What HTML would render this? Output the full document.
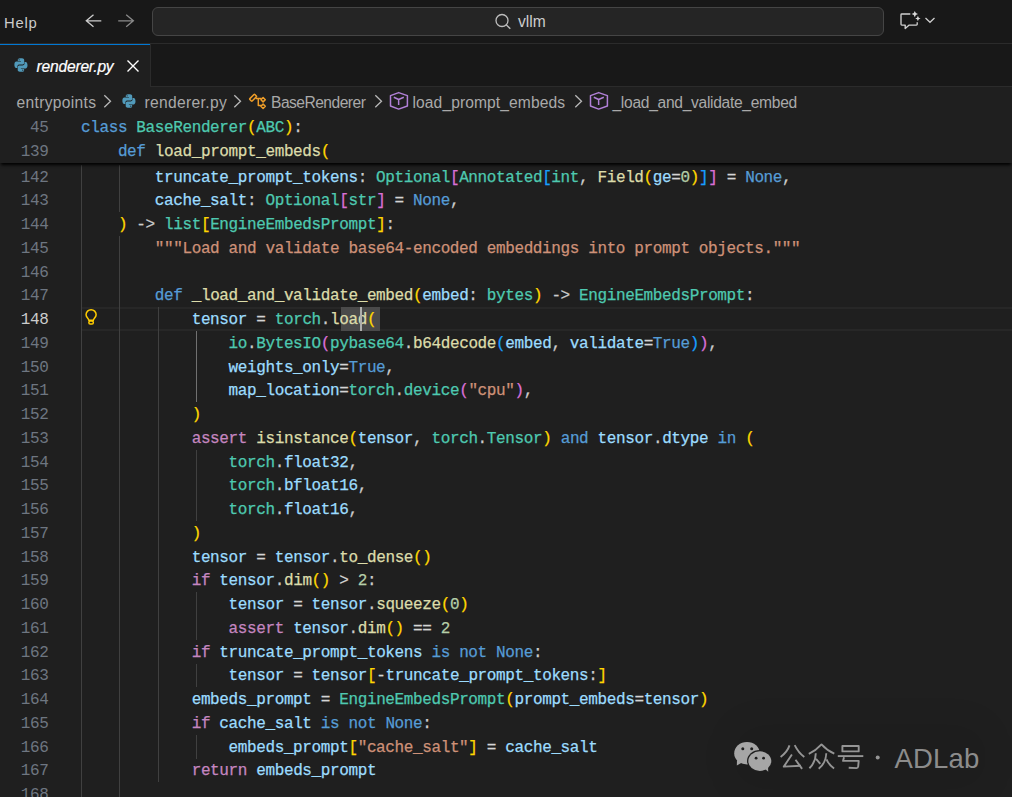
<!DOCTYPE html>
<html><head><meta charset="utf-8">
<style>
*{margin:0;padding:0;box-sizing:border-box}
html,body{width:1012px;height:797px;overflow:hidden;background:#1f1f1f}
body{position:relative;font-family:"Liberation Sans",sans-serif}
.abs{position:absolute}
#title{position:absolute;left:0;top:0;width:1012px;height:43px;background:#181818}
#titleb{position:absolute;left:0;top:43px;width:1012px;height:1px;background:#2b2b2b}
#tabs{position:absolute;left:0;top:44px;width:1012px;height:42px;background:#181818}
#tabsb{position:absolute;left:0;top:86px;width:1012px;height:1px;background:#2b2b2b}
#tab{position:absolute;left:0;top:44px;width:150px;height:43px;background:#1f1f1f}
#tabtop{position:absolute;left:0;top:44px;width:150px;height:1px;background:#0078d4}
#tabr{position:absolute;left:150px;top:44px;width:1px;height:43px;background:#2b2b2b}
.menu{position:absolute;left:4px;top:14.5px;font-size:14.8px;letter-spacing:0.8px;color:#cccccc}
#search{position:absolute;left:152px;top:7px;width:732px;height:29px;border:1px solid #454545;border-radius:6px;background:#252525}
.stext{position:absolute;left:518px;top:12.5px;font-size:15.6px;color:#cccccc}
.bc{position:absolute;top:94px;font-size:15.6px;color:#a9a9a9;white-space:pre}
.code{font-family:"Liberation Mono",monospace}
.ln{position:absolute;left:0;width:48.5px;text-align:right;font-family:"Liberation Mono",monospace;font-size:16px;line-height:23.75px;color:#6e7681;white-space:pre;letter-spacing:-0.38px}
.ln.act{color:#cccccc}
.cl{position:absolute;left:81.0px;font-family:"Liberation Mono",monospace;font-size:16px;line-height:23.75px;color:#cccccc;white-space:pre;letter-spacing:-0.38px;-webkit-text-stroke:0.25px currentColor}
.g{position:absolute;width:1px;background:#404040}
.ga{background:#707070}
.k{color:#569cd6}.c{color:#c586c0}.t{color:#4ec9b0}.f{color:#dcdcaa}.v{color:#9cdcfe}.s{color:#ce9178}.n{color:#b5cea8}
.b1{color:#ffd700}.b2{color:#da70d6}.b3{color:#179fff}.o{color:#d4d4d4}
#sticky{position:absolute;left:0;top:115px;width:1012px;height:48px;background:#1f1f1f;box-shadow:0 3px 3px -1px #000;z-index:5}
#curline{position:absolute;left:82px;top:307px;width:930px;height:24px;border-top:2px solid #272727;border-bottom:2px solid #272727}
#wordhl{position:absolute;left:341px;top:307px;width:39px;height:24px;background:#4a4a4a}
#cursor{position:absolute;left:360px;top:307px;width:2px;height:24px;background:#aeafad;z-index:3}
</style></head><body>
<div id="title"></div><div id="titleb"></div>
<div class="menu">Help</div>
<svg class="abs" style="left:84px;top:13px" width="20" height="16" viewBox="0 0 20 16"><path d="M9.5 1.8 L2.3 7.8 L9.5 13.8 M2.5 7.8 H17.3" stroke="#cccccc" stroke-width="1.3" fill="none"/></svg>
<svg class="abs" style="left:116px;top:13px" width="20" height="16" viewBox="0 0 20 16"><path d="M10.2 1.8 L17.4 7.8 L10.2 13.8 M2.2 7.8 H17.2" stroke="#8a8a8a" stroke-width="1.3" fill="none"/></svg>
<div id="search"></div>
<svg class="abs" style="left:494px;top:12.6px" width="18" height="18" viewBox="0 0 18 18"><circle cx="8" cy="7.5" r="6" stroke="#bdbdbd" stroke-width="1.3" fill="none"/><path d="M12.2 11.7 L16.3 15.8" stroke="#bdbdbd" stroke-width="1.4"/></svg>
<div class="stext">vllm</div>
<svg class="abs" style="left:898px;top:10px" width="26" height="22" viewBox="0 0 26 22"><path d="M12.3 4 H3.8 Q3 4 3 4.8 V14.3 Q3 15.1 3.8 15.1 H7.2 V18.6 L11.2 15.1 H18.4 Q19.2 15.1 19.2 14.3 V12.3" stroke="#d0d0d0" stroke-width="1.35" fill="none" stroke-linejoin="round"/><path d="M16.8 0.8999999999999995 L17.824 3.0759999999999996 L20.0 4.1 L17.824 5.124 L16.8 7.3 L15.776 5.124 L13.600000000000001 4.1 L15.776 3.0759999999999996 Z" fill="#d8d8d8"/><path d="M19.9 5.8 L20.764 7.636 L22.599999999999998 8.5 L20.764 9.364 L19.9 11.2 L19.035999999999998 9.364 L17.2 8.5 L19.035999999999998 7.636 Z" fill="#d8d8d8"/></svg>
<svg class="abs" style="left:924px;top:15px" width="12" height="10" viewBox="0 0 12 10"><path d="M1.5 3 L6 7.3 L10.5 3" stroke="#cccccc" stroke-width="1.3" fill="none"/></svg>

<div id="tabs"></div><div id="tabsb"></div>
<div id="tab"></div><div id="tabtop"></div><div id="tabr"></div>
<svg class="abs" style="left:13px;top:57px" width="16" height="16" viewBox="0 0 16 16"><g fill="#519aba"><path d="M7.9 1.2c-3.3 0-3.1 1.4-3.1 1.4v1.5h3.2v.5H3.5S1.4 4.4 1.4 7.8s1.9 3.3 1.9 3.3h1.1V9.5s-.1-1.9 1.9-1.9h3.1s1.8 0 1.8-1.8V2.9s.3-1.7-3.3-1.7zm-1.8 1c.3 0 .6.3.6.6s-.3.6-.6.6-.6-.3-.6-.6.3-.6.6-.6z"/><path d="M8 14.8c3.3 0 3.1-1.4 3.1-1.4v-1.5H7.9v-.5h4.5s2.1.2 2.1-3.2-1.9-3.3-1.9-3.3h-1.1v1.6s.1 1.9-1.9 1.9H6.5s-1.8 0-1.8 1.8v2.9s-.3 1.7 3.3 1.7zm1.8-1c-.3 0-.6-.3-.6-.6s.3-.6.6-.6.6.3.6.6-.3.6-.6.6z"/></g></svg>
<div class="abs" style="left:36.5px;top:57.5px;font-size:15.6px;font-style:italic;color:#ffffff;letter-spacing:-0.2px;-webkit-text-stroke:0.2px #fff">renderer.py</div>
<svg class="abs" style="left:125px;top:58px" width="16" height="16" viewBox="0 0 16 16"><path d="M2.5 2.5 L13.5 13.5 M13.5 2.5 L2.5 13.5" stroke="#ffffff" stroke-width="1.4"/></svg>

<div class="bc" style="left:16.5px;letter-spacing:0.33px">entrypoints</div>
<svg class="abs" style="left:102px;top:94px" width="12" height="16" viewBox="0 0 12 16"><path d="M2.3 1.2 L8.5 7.2 L2.3 13.2" stroke="#b8b8b8" stroke-width="1.3" fill="none"/></svg>
<svg class="abs" style="left:121px;top:93px" width="16" height="16" viewBox="0 0 16 16"><g fill="#519aba"><path d="M7.9 1.2c-3.3 0-3.1 1.4-3.1 1.4v1.5h3.2v.5H3.5S1.4 4.4 1.4 7.8s1.9 3.3 1.9 3.3h1.1V9.5s-.1-1.9 1.9-1.9h3.1s1.8 0 1.8-1.8V2.9s.3-1.7-3.3-1.7zm-1.8 1c.3 0 .6.3.6.6s-.3.6-.6.6-.6-.3-.6-.6.3-.6.6-.6z"/><path d="M8 14.8c3.3 0 3.1-1.4 3.1-1.4v-1.5H7.9v-.5h4.5s2.1.2 2.1-3.2-1.9-3.3-1.9-3.3h-1.1v1.6s.1 1.9-1.9 1.9H6.5s-1.8 0-1.8 1.8v2.9s-.3 1.7 3.3 1.7zm1.8-1c-.3 0-.6-.3-.6-.6s.3-.6.6-.6.6.3.6.6-.3.6-.6.6z"/></g></svg>
<div class="bc" style="left:144.5px;letter-spacing:0.33px">renderer.py</div>
<svg class="abs" style="left:232px;top:94px" width="12" height="16" viewBox="0 0 12 16"><path d="M2.3 1.2 L8.5 7.2 L2.3 13.2" stroke="#b8b8b8" stroke-width="1.3" fill="none"/></svg>
<svg class="abs" style="left:244px;top:90px" width="26" height="22" viewBox="0 0 26 22"><g stroke="#ee9d28" stroke-width="1.5" fill="none" stroke-linejoin="round"><rect x="5.6" y="6.1" width="7" height="3.3" rx="0.6" transform="rotate(-45 9.1 7.75)"/><path d="M11.8 8.6 H17.5 M14.3 8.6 V15.5 H17.2"/><path d="M19.1 7.5 L21.3 9.7 L19.1 11.9 L16.9 9.7 Z"/><path d="M19.1 14.1 L21.3 16.3 L19.1 18.5 L16.9 16.3 Z"/></g></svg>
<div class="bc" style="left:271px;letter-spacing:-0.52px">BaseRenderer</div>
<svg class="abs" style="left:373px;top:94px" width="12" height="16" viewBox="0 0 12 16"><path d="M2.3 1.2 L8.5 7.2 L2.3 13.2" stroke="#b8b8b8" stroke-width="1.3" fill="none"/></svg>
<svg class="abs" style="left:388px;top:91px" width="22" height="20" viewBox="0 0 22 20"><g stroke="#b180d7" stroke-width="1.5" fill="none" stroke-linejoin="round"><path d="M10.65 1.6 L19.4 4.6 V15 L10.65 18.1 L2.5 15 V4.6 Z"/><path d="M5.8 6.3 L10.65 8.45 L15.8 6.3 M10.65 8.45 V13.9"/></g></svg>
<div class="bc" style="left:412.5px;letter-spacing:0.1px">load_prompt_embeds</div>
<svg class="abs" style="left:573px;top:94px" width="12" height="16" viewBox="0 0 12 16"><path d="M2.3 1.2 L8.5 7.2 L2.3 13.2" stroke="#b8b8b8" stroke-width="1.3" fill="none"/></svg>
<svg class="abs" style="left:587.5px;top:91px" width="22" height="20" viewBox="0 0 22 20"><g stroke="#b180d7" stroke-width="1.5" fill="none" stroke-linejoin="round"><path d="M10.65 1.6 L19.4 4.6 V15 L10.65 18.1 L2.5 15 V4.6 Z"/><path d="M5.8 6.3 L10.65 8.45 L15.8 6.3 M10.65 8.45 V13.9"/></g></svg>
<div class="bc" style="left:612.5px;letter-spacing:-0.3px">_load_and_validate_embed</div>

<div id="curline"></div>
<div id="wordhl"></div>
<div id="cursor"></div>
<div class="g" style="left:81px;top:165px;height:24px"></div><div class="g" style="left:119px;top:165px;height:24px"></div>
<div class="ln" style="top:166.70px">142</div>
<div class="cl" style="top:166.70px">        <span class="v">truncate_prompt_tokens</span>: <span class="t">Optional</span><span class="b2">[</span><span class="t">Annotated</span><span class="b3">[</span><span class="t">int</span>, <span class="f">Field</span><span class="b1">(</span><span class="v">ge</span><span class="o">=</span><span class="n">0</span><span class="b1">)</span><span class="b3">]</span><span class="b2">]</span> <span class="o">=</span> <span class="k">None</span>,</div>
<div class="g" style="left:81px;top:189px;height:23px"></div><div class="g" style="left:119px;top:189px;height:23px"></div>
<div class="ln" style="top:190.45px">143</div>
<div class="cl" style="top:190.45px">        <span class="v">cache_salt</span>: <span class="t">Optional</span><span class="b2">[</span><span class="t">str</span><span class="b2">]</span> <span class="o">=</span> <span class="k">None</span>,</div>
<div class="g" style="left:81px;top:212px;height:24px"></div>
<div class="ln" style="top:214.20px">144</div>
<div class="cl" style="top:214.20px">    <span class="b1">)</span> -&gt; <span class="t">list</span><span class="b1">[</span><span class="t">EngineEmbedsPrompt</span><span class="b1">]</span>:</div>
<div class="g" style="left:81px;top:236px;height:24px"></div><div class="g" style="left:119px;top:236px;height:24px"></div>
<div class="ln" style="top:237.95px">145</div>
<div class="cl" style="top:237.95px">        <span class="s">&quot;&quot;&quot;Load and validate base64-encoded embeddings into prompt objects.&quot;&quot;&quot;</span></div>
<div class="g" style="left:81px;top:260px;height:24px"></div><div class="g" style="left:119px;top:260px;height:24px"></div>
<div class="ln" style="top:261.70px">146</div>
<div class="cl" style="top:261.70px"></div>
<div class="g" style="left:81px;top:284px;height:23px"></div><div class="g" style="left:119px;top:284px;height:23px"></div>
<div class="ln" style="top:285.45px">147</div>
<div class="cl" style="top:285.45px">        <span class="k">def</span> <span class="f">_load_and_validate_embed</span><span class="b1">(</span><span class="v">embed</span>: <span class="t">bytes</span><span class="b1">)</span> -&gt; <span class="t">EngineEmbedsPrompt</span>:</div>
<div class="g" style="left:81px;top:307px;height:24px"></div><div class="g" style="left:119px;top:307px;height:24px"></div><div class="g" style="left:158px;top:307px;height:24px"></div>
<div class="ln act" style="top:309.20px">148</div>
<div class="cl" style="top:309.20px">            <span class="v">tensor</span> <span class="o">=</span> <span class="t">torch</span>.<span class="f">load</span><span class="b1">(</span></div>
<div class="g" style="left:81px;top:331px;height:24px"></div><div class="g" style="left:119px;top:331px;height:24px"></div><div class="g" style="left:158px;top:331px;height:24px"></div><div class="g ga" style="left:196px;top:331px;height:24px"></div>
<div class="ln" style="top:332.95px">149</div>
<div class="cl" style="top:332.95px">                <span class="t">io</span>.<span class="t">BytesIO</span><span class="b2">(</span><span class="t">pybase64</span>.<span class="f">b64decode</span><span class="b3">(</span><span class="v">embed</span>, <span class="v">validate</span><span class="o">=</span><span class="k">True</span><span class="b3">)</span><span class="b2">)</span>,</div>
<div class="g" style="left:81px;top:355px;height:24px"></div><div class="g" style="left:119px;top:355px;height:24px"></div><div class="g" style="left:158px;top:355px;height:24px"></div><div class="g ga" style="left:196px;top:355px;height:24px"></div>
<div class="ln" style="top:356.70px">150</div>
<div class="cl" style="top:356.70px">                <span class="v">weights_only</span><span class="o">=</span><span class="k">True</span>,</div>
<div class="g" style="left:81px;top:379px;height:23px"></div><div class="g" style="left:119px;top:379px;height:23px"></div><div class="g" style="left:158px;top:379px;height:23px"></div><div class="g ga" style="left:196px;top:379px;height:23px"></div>
<div class="ln" style="top:380.45px">151</div>
<div class="cl" style="top:380.45px">                <span class="v">map_location</span><span class="o">=</span><span class="t">torch</span>.<span class="t">device</span><span class="b2">(</span><span class="s">&quot;cpu&quot;</span><span class="b2">)</span>,</div>
<div class="g" style="left:81px;top:402px;height:24px"></div><div class="g" style="left:119px;top:402px;height:24px"></div><div class="g" style="left:158px;top:402px;height:24px"></div>
<div class="ln" style="top:404.20px">152</div>
<div class="cl" style="top:404.20px">            <span class="b1">)</span></div>
<div class="g" style="left:81px;top:426px;height:24px"></div><div class="g" style="left:119px;top:426px;height:24px"></div><div class="g" style="left:158px;top:426px;height:24px"></div>
<div class="ln" style="top:427.95px">153</div>
<div class="cl" style="top:427.95px">            <span class="c">assert</span> <span class="f">isinstance</span><span class="b1">(</span><span class="v">tensor</span>, <span class="t">torch</span>.<span class="t">Tensor</span><span class="b1">)</span> <span class="k">and</span> <span class="v">tensor</span>.<span class="v">dtype</span> <span class="k">in</span> <span class="b1">(</span></div>
<div class="g" style="left:81px;top:450px;height:24px"></div><div class="g" style="left:119px;top:450px;height:24px"></div><div class="g" style="left:158px;top:450px;height:24px"></div><div class="g" style="left:196px;top:450px;height:24px"></div>
<div class="ln" style="top:451.70px">154</div>
<div class="cl" style="top:451.70px">                <span class="t">torch</span>.<span class="v">float32</span>,</div>
<div class="g" style="left:81px;top:474px;height:23px"></div><div class="g" style="left:119px;top:474px;height:23px"></div><div class="g" style="left:158px;top:474px;height:23px"></div><div class="g" style="left:196px;top:474px;height:23px"></div>
<div class="ln" style="top:475.45px">155</div>
<div class="cl" style="top:475.45px">                <span class="t">torch</span>.<span class="v">bfloat16</span>,</div>
<div class="g" style="left:81px;top:497px;height:24px"></div><div class="g" style="left:119px;top:497px;height:24px"></div><div class="g" style="left:158px;top:497px;height:24px"></div><div class="g" style="left:196px;top:497px;height:24px"></div>
<div class="ln" style="top:499.20px">156</div>
<div class="cl" style="top:499.20px">                <span class="t">torch</span>.<span class="v">float16</span>,</div>
<div class="g" style="left:81px;top:521px;height:24px"></div><div class="g" style="left:119px;top:521px;height:24px"></div><div class="g" style="left:158px;top:521px;height:24px"></div>
<div class="ln" style="top:522.95px">157</div>
<div class="cl" style="top:522.95px">            <span class="b1">)</span></div>
<div class="g" style="left:81px;top:545px;height:24px"></div><div class="g" style="left:119px;top:545px;height:24px"></div><div class="g" style="left:158px;top:545px;height:24px"></div>
<div class="ln" style="top:546.70px">158</div>
<div class="cl" style="top:546.70px">            <span class="v">tensor</span> <span class="o">=</span> <span class="v">tensor</span>.<span class="f">to_dense</span><span class="b1">()</span></div>
<div class="g" style="left:81px;top:569px;height:23px"></div><div class="g" style="left:119px;top:569px;height:23px"></div><div class="g" style="left:158px;top:569px;height:23px"></div>
<div class="ln" style="top:570.45px">159</div>
<div class="cl" style="top:570.45px">            <span class="c">if</span> <span class="v">tensor</span>.<span class="f">dim</span><span class="b1">()</span> <span class="o">&gt;</span> <span class="n">2</span>:</div>
<div class="g" style="left:81px;top:592px;height:24px"></div><div class="g" style="left:119px;top:592px;height:24px"></div><div class="g" style="left:158px;top:592px;height:24px"></div><div class="g" style="left:196px;top:592px;height:24px"></div>
<div class="ln" style="top:594.20px">160</div>
<div class="cl" style="top:594.20px">                <span class="v">tensor</span> <span class="o">=</span> <span class="v">tensor</span>.<span class="f">squeeze</span><span class="b1">(</span><span class="n">0</span><span class="b1">)</span></div>
<div class="g" style="left:81px;top:616px;height:24px"></div><div class="g" style="left:119px;top:616px;height:24px"></div><div class="g" style="left:158px;top:616px;height:24px"></div><div class="g" style="left:196px;top:616px;height:24px"></div>
<div class="ln" style="top:617.95px">161</div>
<div class="cl" style="top:617.95px">                <span class="c">assert</span> <span class="v">tensor</span>.<span class="f">dim</span><span class="b1">()</span> <span class="o">==</span> <span class="n">2</span></div>
<div class="g" style="left:81px;top:640px;height:24px"></div><div class="g" style="left:119px;top:640px;height:24px"></div><div class="g" style="left:158px;top:640px;height:24px"></div>
<div class="ln" style="top:641.70px">162</div>
<div class="cl" style="top:641.70px">            <span class="c">if</span> <span class="v">truncate_prompt_tokens</span> <span class="k">is not</span> <span class="k">None</span>:</div>
<div class="g" style="left:81px;top:664px;height:23px"></div><div class="g" style="left:119px;top:664px;height:23px"></div><div class="g" style="left:158px;top:664px;height:23px"></div><div class="g" style="left:196px;top:664px;height:23px"></div>
<div class="ln" style="top:665.45px">163</div>
<div class="cl" style="top:665.45px">                <span class="v">tensor</span> <span class="o">=</span> <span class="v">tensor</span><span class="b1">[</span><span class="o">-</span><span class="v">truncate_prompt_tokens</span>:<span class="b1">]</span></div>
<div class="g" style="left:81px;top:687px;height:24px"></div><div class="g" style="left:119px;top:687px;height:24px"></div><div class="g" style="left:158px;top:687px;height:24px"></div>
<div class="ln" style="top:689.20px">164</div>
<div class="cl" style="top:689.20px">            <span class="v">embeds_prompt</span> <span class="o">=</span> <span class="t">EngineEmbedsPrompt</span><span class="b1">(</span><span class="v">prompt_embeds</span><span class="o">=</span><span class="v">tensor</span><span class="b1">)</span></div>
<div class="g" style="left:81px;top:711px;height:24px"></div><div class="g" style="left:119px;top:711px;height:24px"></div><div class="g" style="left:158px;top:711px;height:24px"></div>
<div class="ln" style="top:712.95px">165</div>
<div class="cl" style="top:712.95px">            <span class="c">if</span> <span class="v">cache_salt</span> <span class="k">is not</span> <span class="k">None</span>:</div>
<div class="g" style="left:81px;top:735px;height:24px"></div><div class="g" style="left:119px;top:735px;height:24px"></div><div class="g" style="left:158px;top:735px;height:24px"></div><div class="g" style="left:196px;top:735px;height:24px"></div>
<div class="ln" style="top:736.70px">166</div>
<div class="cl" style="top:736.70px">                <span class="v">embeds_prompt</span><span class="b1">[</span><span class="s">&quot;cache_salt&quot;</span><span class="b1">]</span> <span class="o">=</span> <span class="v">cache_salt</span></div>
<div class="g" style="left:81px;top:759px;height:23px"></div><div class="g" style="left:119px;top:759px;height:23px"></div><div class="g" style="left:158px;top:759px;height:23px"></div>
<div class="ln" style="top:760.45px">167</div>
<div class="cl" style="top:760.45px">            <span class="c">return</span> <span class="v">embeds_prompt</span></div>
<div class="g" style="left:81px;top:782px;height:24px"></div><div class="g" style="left:119px;top:782px;height:24px"></div>
<div class="ln" style="top:784.20px">168</div>
<div class="cl" style="top:784.20px"></div>
<svg class="abs" style="left:84px;top:308px;z-index:4" width="14" height="18" viewBox="0 0 14 18"><g stroke="#ffcc00" stroke-width="1.5" fill="none"><path d="M4.9 12.2 C4.9 10.6 2.05 9.4 2.05 6.7 A5.05 5.05 0 1 1 12.15 6.7 C12.15 9.4 9.3 10.6 9.3 12.2 Z"/><rect x="4.9" y="12.9" width="4.4" height="3.2" rx="1.3"/></g></svg>
<div id="sticky">
</div>
<div style="position:absolute;left:0;top:0;z-index:6">
<div class="ln" style="top:116.80px">45</div>
<div class="cl" style="top:116.80px"><span class="k">class</span> <span class="t">BaseRenderer</span><span class="b1">(</span><span class="t">ABC</span><span class="b1">)</span>:</div>
<div class="ln" style="top:140.55px">139</div>
<div class="cl" style="top:140.55px">    <span class="k">def</span> <span class="f">load_prompt_embeds</span><span class="b1">(</span></div>
</div>

<div class="abs" style="left:730px;top:722px;width:260px;height:70px;border-radius:30px;background:rgba(0,0,0,0.06);filter:blur(14px);z-index:6"></div>
<svg class="abs" style="left:720px;top:728px;z-index:7" width="280" height="56" viewBox="720 728 280 56">
<g fill="#a6a6a6">
<ellipse cx="747" cy="753.2" rx="12.8" ry="11.3"/>
<path d="M737 760 L736.8 765.6 L743 762 Z"/>
</g>
<g fill="#1f1f1f"><circle cx="742.8" cy="748.8" r="1.5"/><circle cx="751.7" cy="748.8" r="1.5"/>
<ellipse cx="759.8" cy="761.1" rx="12.8" ry="11.1"/></g>
<g fill="#a6a6a6">
<ellipse cx="759.8" cy="761.1" rx="11.5" ry="9.8"/>
<path d="M764 768 L768.2 771.8 L768 765 Z"/>
</g>
<g fill="#1f1f1f"><circle cx="756.1" cy="758.2" r="1.4"/><circle cx="763.6" cy="758.2" r="1.4"/></g>
<g stroke="#959595" stroke-width="1.9" fill="none" stroke-linecap="butt" stroke-linejoin="round">
<path d="M789.5 745.4 Q787.4 752 780.6 756.9"/><path d="M794.7 745.2 Q798.5 752.9 804.3 757.1"/>
<path d="M791.9 754.5 L783.8 766.6 L801 765.8"/><path d="M795.5 759.7 L802.1 768.9"/>
<path d="M808.8 753.9 Q816 750.5 821.5 744.4 Q827 750.5 834.3 753.7"/>
<path d="M815.8 753.3 Q815.8 762 809.4 768.3"/><path d="M816 758.9 L820.3 763.9"/>
<path d="M826.3 753.3 Q826 763 818.7 768.7"/><path d="M826.5 759.3 Q829 765 834.1 768.5"/>
<rect x="842.4" y="746" width="16.3" height="5.4"/>
<path d="M837.8 756.1 H863.3"/>
<path d="M844 757.3 L843 760.9 H858.7 L858.2 766.5 Q858 768.1 856.5 768.1 L848.7 767.8"/>
</g>
<circle cx="877.7" cy="757.5" r="2" fill="#959595"/>
</svg>
<div class="abs" style="left:894.5px;top:743.5px;z-index:7;font-size:27.5px;color:#8c8c8c;letter-spacing:0.2px;line-height:30px">ADLab</div>
</body></html>
